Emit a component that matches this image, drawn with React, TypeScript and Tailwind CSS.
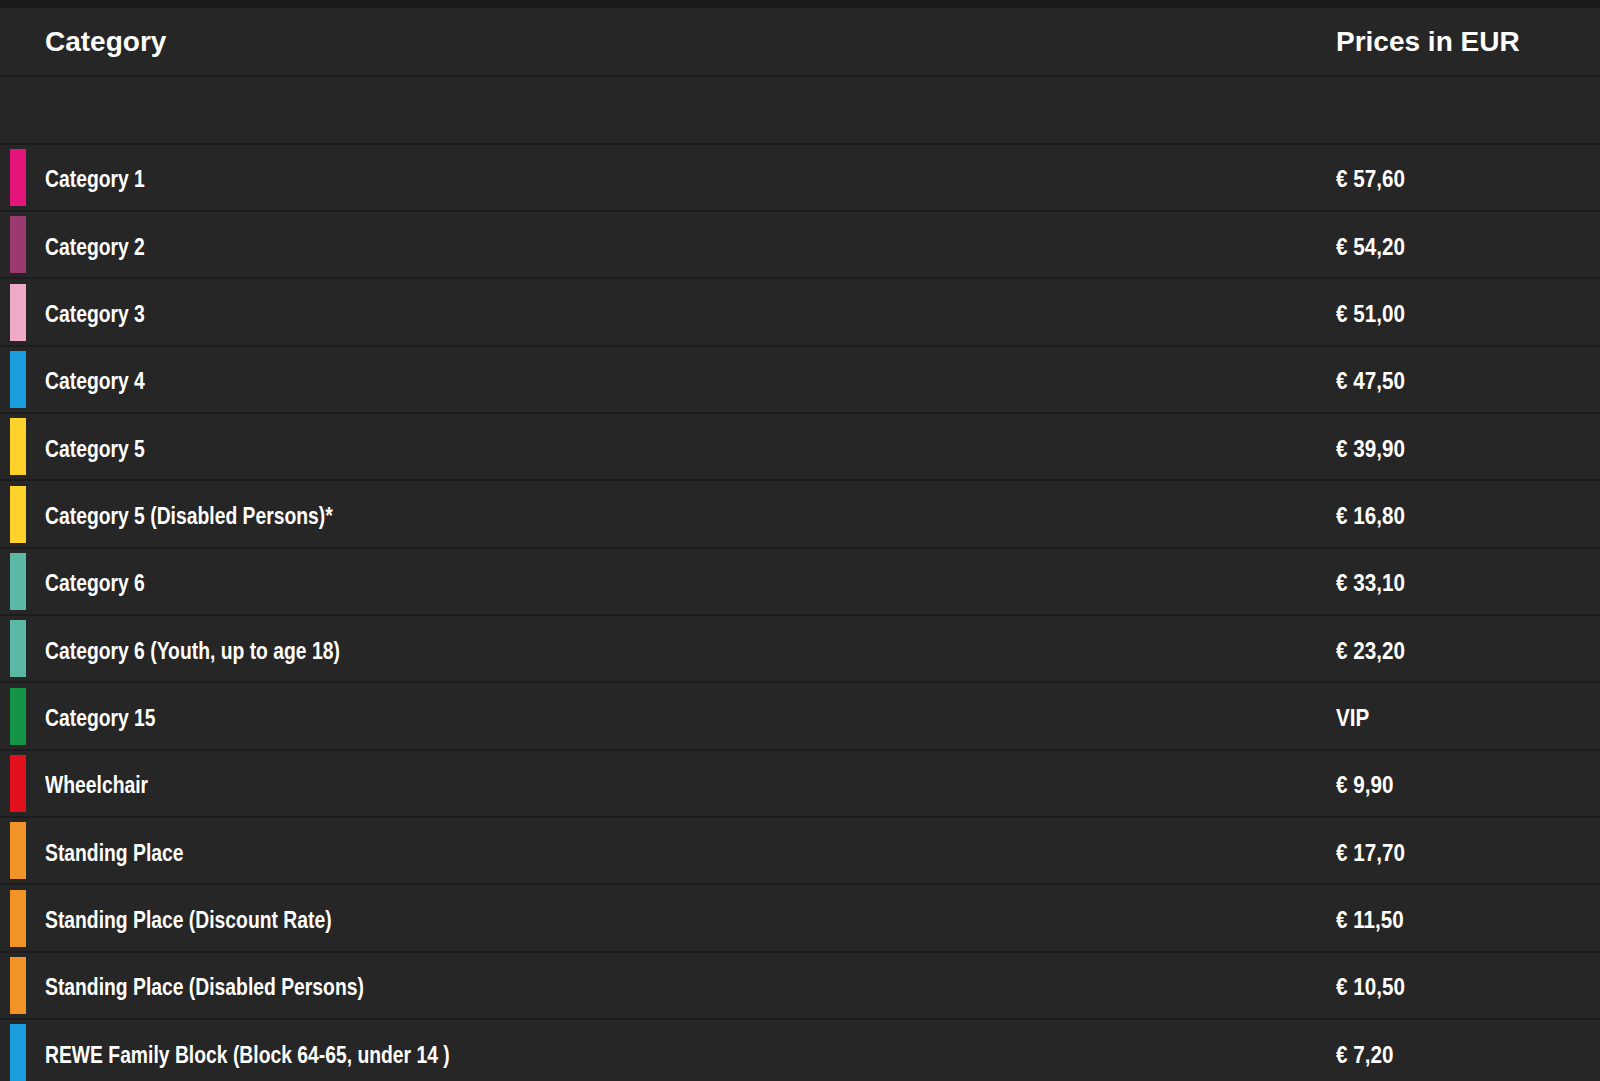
import React from 'react';

interface PriceRow {
  label: string;
  price: string;
  color: string;
}

const rows: PriceRow[] = [
  { label: 'Category 1', price: '€ 57,60', color: 'bg-[#e3157a]' },
  { label: 'Category 2', price: '€ 54,20', color: 'bg-[#9b3a6e]' },
  { label: 'Category 3', price: '€ 51,00', color: 'bg-[#eeaac6]' },
  { label: 'Category 4', price: '€ 47,50', color: 'bg-[#1b9ede]' },
  { label: 'Category 5', price: '€ 39,90', color: 'bg-[#fdd22b]' },
  { label: 'Category 5 (Disabled Persons)*', price: '€ 16,80', color: 'bg-[#fdd22b]' },
  { label: 'Category 6', price: '€ 33,10', color: 'bg-[#5cb8a6]' },
  { label: 'Category 6 (Youth, up to age 18)', price: '€ 23,20', color: 'bg-[#5cb8a6]' },
  { label: 'Category 15', price: 'VIP', color: 'bg-[#149447]' },
  { label: 'Wheelchair', price: '€ 9,90', color: 'bg-[#e2101f]' },
  { label: 'Standing Place', price: '€ 17,70', color: 'bg-[#f19427]' },
  { label: 'Standing Place (Discount Rate)', price: '€ 11,50', color: 'bg-[#f19427]' },
  { label: 'Standing Place (Disabled Persons)', price: '€ 10,50', color: 'bg-[#f19427]' },
  { label: 'REWE Family Block (Block 64-65, under 14 )', price: '€ 7,20', color: 'bg-[#1b9ede]' },
];

const App: React.FC = () => {
  return (
    <div className="w-[1600px] h-[1081px] overflow-hidden bg-[#262626] text-white font-['Liberation_Sans',Arial,sans-serif]">
      {/* top strip */}
      <div className="h-2 bg-[#1b1b1b]" />

      {/* Header */}
      <div className="h-[67.35px] flex items-center font-bold text-[28px]">
        <div className="flex-1 pl-[45px]">Category</div>
        <div className="w-[264px]">Prices in EUR</div>
      </div>

      {/* Spacer row */}
      <div className="h-[67.35px] border-t-2 border-[#1c1c1c]" />

      {rows.map((row) => (
        <div
          key={row.label}
          className="h-[67.35px] border-t-2 border-[#1c1c1c] flex items-center pl-[10px] font-bold text-[24px]"
        >
          <div className={`w-4 h-[57px] shrink-0 ${row.color}`} />
          <div className="flex-1 pl-[19px] pt-1 whitespace-nowrap">
            <span className="inline-block origin-left scale-x-[0.805]">{row.label}</span>
          </div>
          <div className="w-[264px] pt-1 whitespace-nowrap">
            <span className="inline-block origin-left scale-x-[0.86]">{row.price}</span>
          </div>
        </div>
      ))}
    </div>
  );
};

export default App;
